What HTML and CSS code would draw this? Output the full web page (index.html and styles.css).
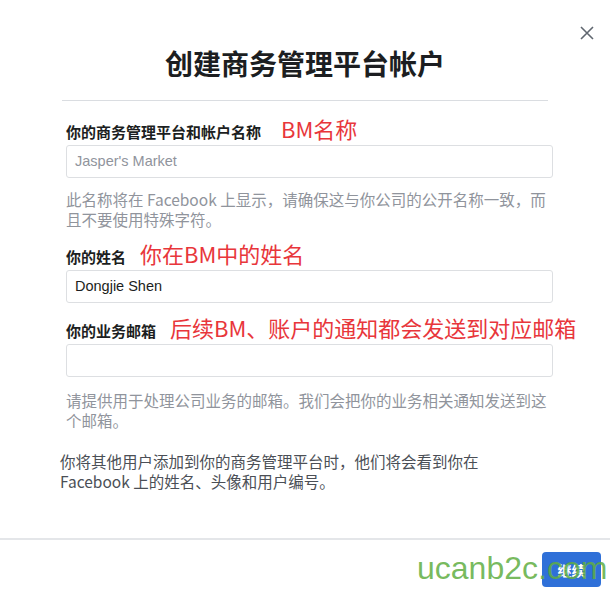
FILE: index.html
```html
<!DOCTYPE html>
<html lang="zh-CN">
<head>
  <meta charset="UTF-8" />
  <title>创建商务管理平台帐户</title>
  <link rel="stylesheet" href="styles.css">
</head>
<body>
  <div class="dialog">
    <div class="close-row">
      <svg class="close" viewBox="0 0 14 14" width="14" height="14"><path d="M1 1 L13 13 M13 1 L1 13" stroke="#606770" stroke-width="1.6" fill="none"/></svg>
    </div>
    <h1>创建商务管理平台帐户</h1>

    <div class="form">
      <div class="label-row">
        <span class="label">你的商务管理平台和帐户名称</span>
        <span class="mark first">BM名称</span>
      </div>
      <div class="input placeholder">Jasper's Market</div>
      <p class="help">此名称将在 Facebook 上显示，请确保这与你公司的公开名称一致，而且不要使用特殊字符。</p>

      <div class="label-row">
        <span class="label">你的姓名</span>
        <span class="mark">你在BM中的姓名</span>
      </div>
      <div class="input">Dongjie Shen</div>

      <div class="label-row">
        <span class="label">你的业务邮箱</span>
        <span class="mark">后续BM、账户的通知都会发送到对应邮箱</span>
      </div>
      <div class="input"></div>
      <p class="help email">请提供用于处理公司业务的邮箱。我们会把你的业务相关通知发送到这个邮箱。</p>
    </div>

    <p class="note">你将其他用户添加到你的商务管理平台时，他们将会看到你在 Facebook 上的姓名、头像和用户编号。</p>
  </div>

  <footer>
    <button>继续</button>
  </footer>

  <div class="watermark">ucanb2c.com</div>
</body>
</html>
```

FILE: styles.css
```css
body {
  margin: 0;
  background: #fff;
  font-family: "Noto Sans CJK SC", "Noto Sans", sans-serif;
  color: #1c1e21;
  width: 615px;
  height: 595px;
  overflow: hidden;
  position: relative;
}
.dialog {
  padding: 0 62px 0 60px;
}
.close-row {
  display: flex;
  justify-content: flex-end;
  padding-top: 26px;
  margin-right: -41px;
  height: 14px;
}
h1 {
  margin: 3px 0 0 2px;
  width: 486px;
  font-size: 28px;
  line-height: 40px;
  font-weight: 700;
  text-align: center;
  padding-bottom: 17px;
  border-bottom: 1px solid #dadde1;
}
.form {
  padding: 3px 0 0 6px;
  width: 487px;
}
.label-row {
  display: flex;
  align-items: baseline;
  gap: 14px;
  height: 28px;
  margin-top: 10px;
  white-space: nowrap;
}
.label {
  font-size: 15px;
  font-weight: 700;
  line-height: 28px;
}
.mark {
  color: #e8363b;
  font-size: 22px;
  line-height: 28px;
}
.mark.first {
  margin-left: 6px;
}
.input {
  box-sizing: border-box;
  height: 33px;
  margin-top: 3px;
  border: 1px solid #dddfe2;
  border-radius: 3px;
  padding: 0 8px;
  font-family: "Liberation Sans", Arial, sans-serif;
  font-size: 14.5px;
  line-height: 31px;
  color: #1c1e21;
}
.input.placeholder {
  color: #90949c;
}
.help {
  margin: 11px 0 0;
  font-size: 15.5px;
  line-height: 20px;
  color: #90949c;
}
.help.email {
  margin-top: 13px;
}
.note {
  margin: 21px 0 0;
  width: 490px;
  font-size: 15.5px;
  line-height: 20px;
  color: #4b4f56;
}
footer {
  position: absolute;
  left: 0;
  right: 5px;
  top: 538px;
  border-top: 2px solid #e4e6e9;
  display: flex;
  justify-content: flex-end;
  padding: 12px 9px 0 0;
}
button {
  width: 59px;
  height: 35px;
  border: none;
  border-radius: 4px;
  background: #2f70d8;
  color: #fff;
  font-family: "Noto Sans CJK SC", sans-serif;
  font-weight: 700;
  font-size: 14px;
}
.watermark {
  position: absolute;
  left: 417px;
  top: 548px;
  font-family: "Liberation Sans", Arial, sans-serif;
  font-size: 32px;
  line-height: 40px;
  color: rgba(96, 174, 66, 0.85);
}
```
